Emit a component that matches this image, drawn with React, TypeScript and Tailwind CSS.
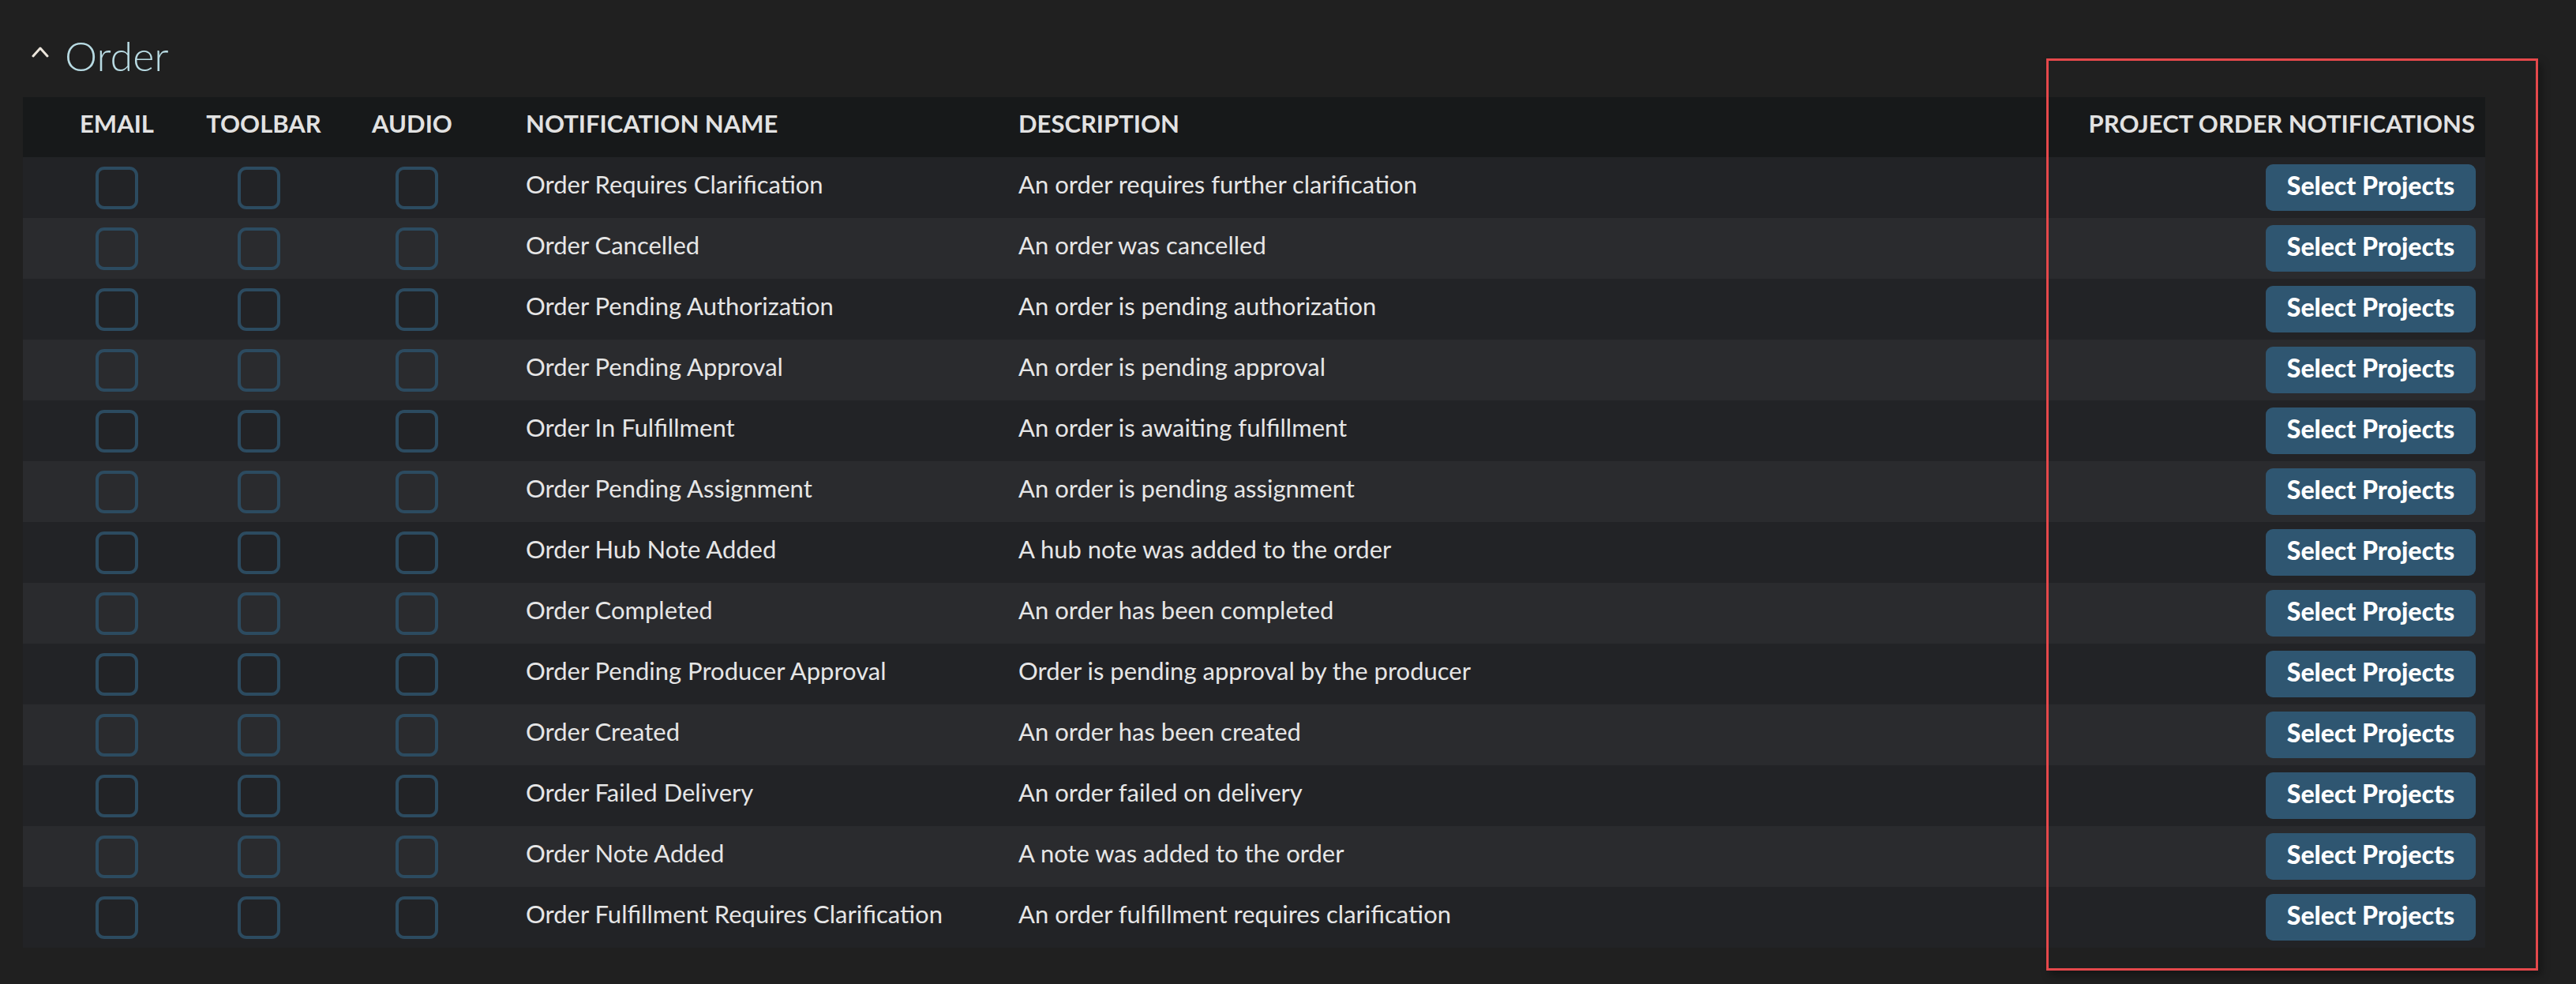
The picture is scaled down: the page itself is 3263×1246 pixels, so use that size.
import React from "react";

const rows: [string, string][] = [
  ["Order Requires Clarification", "An order requires further clarification"],
  ["Order Cancelled", "An order was cancelled"],
  ["Order Pending Authorization", "An order is pending authorization"],
  ["Order Pending Approval", "An order is pending approval"],
  ["Order In Fulfillment", "An order is awaiting fulfillment"],
  ["Order Pending Assignment", "An order is pending assignment"],
  ["Order Hub Note Added", "A hub note was added to the order"],
  ["Order Completed", "An order has been completed"],
  ["Order Pending Producer Approval", "Order is pending approval by the producer"],
  ["Order Created", "An order has been created"],
  ["Order Failed Delivery", "An order failed on delivery"],
  ["Order Note Added", "A note was added to the order"],
  ["Order Fulfillment Requires Clarification", "An order fulfillment requires clarification"],
];

function Box({ className = "" }: { className?: string }) {
  return <div className={`w-[54px] h-[54px] rounded-[11px] border-[4px] border-[#2c4b60] ${className}`} />;
}

const cols = "grid grid-cols-[238px_134px_242px_624px_1fr_560px]";

export default function App() {
  return (
    <div className="relative w-[3263px] h-[1246px] overflow-hidden bg-[#202020] font-['Lato',_'Liberation_Sans',_sans-serif]">
      <div className="flex items-start h-[123px] pl-[40px] pt-[44px]">
        <svg width="22" height="15" viewBox="0 0 22 15" className="mr-[20px] mt-[14px]">
          <polyline points="2,13 11,3 20,13" fill="none" stroke="#ece6dc" strokeWidth="3" strokeLinecap="round" strokeLinejoin="round" />
        </svg>
        <span className="text-[52px] leading-none font-light text-[#b8dbe3]">Order</span>
      </div>
      <div className="ml-[29px] w-[3119px] flex flex-col">
        <div className={`${cols} h-[76px] bg-[#17191a] text-[31px] font-bold text-[#e2e2e2] whitespace-nowrap`}>
          {["EMAIL", "TOOLBAR", "AUDIO"].map((h) => (
            <div key={h} className="pb-[9px] flex items-center justify-center">
              {h}
            </div>
          ))}
          <div className="pb-[9px] flex items-center pl-[23px]">NOTIFICATION NAME</div>
          <div className="pb-[9px] flex items-center pl-[23px]">DESCRIPTION</div>
          <div className="pb-[9px] flex items-center justify-end pr-[13px]">PROJECT ORDER NOTIFICATIONS</div>
        </div>
        {rows.map(([name, desc], i) => (
          <div
            key={name}
            className={`${cols} h-[77px] ${i % 2 === 0 ? "bg-[#222326]" : "bg-[#2a2b2e]"} text-[31px] text-[#e6e6e6] whitespace-nowrap`}
          >
            <div className="flex items-center justify-center"><Box /></div>
            <div className="flex items-center justify-center"><Box className="mr-[12px]" /></div>
            <div className="flex items-center justify-center"><Box className="ml-[12px]" /></div>
            <div className="pb-[9px] flex items-center pl-[23px]">{name}</div>
            <div className="pb-[9px] flex items-center pl-[23px]">{desc}</div>
            <div className="flex items-center justify-end pr-[12px]">
              <button className="w-[266px] h-[59px] pb-[6px] rounded-[9px] bg-[#2f5671] text-white text-[32px] font-black">
                Select Projects
              </button>
            </div>
          </div>
        ))}
      </div>
      <div className="absolute left-[2592px] top-[74px] w-[623px] h-[1155px] border-[3px] border-[#e5484b] shadow-[4px_6px_10px_rgba(0,0,0,0.35)]" />
    </div>
  );
}
